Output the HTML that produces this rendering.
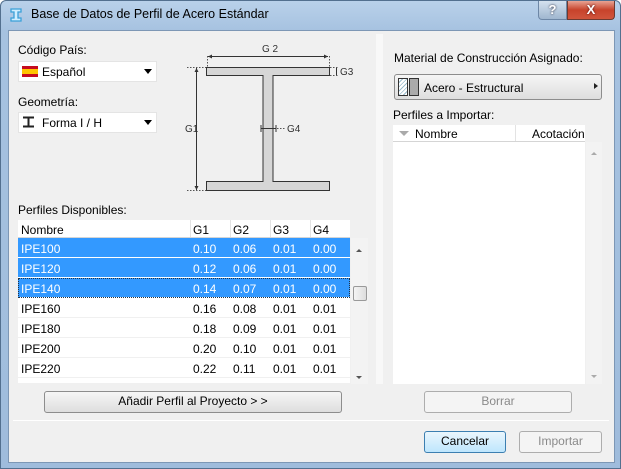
<!DOCTYPE html>
<html><head><meta charset="utf-8"><style>
*{box-sizing:border-box;margin:0;padding:0}
body{width:621px;height:469px;overflow:hidden;font-family:"Liberation Sans",sans-serif;font-size:12px;color:#000;background:#fff}
.win{position:absolute;left:0;top:0;width:621px;height:469px;border:1px solid #53708f;border-radius:6px 6px 0 0;background:linear-gradient(180deg,#b9d1ea 0,#a6c2e0 30px,#9fbcdc 100%)}
.client{position:absolute;left:7px;top:29px;width:607px;height:433px;background:#f0f0f0;border:1px solid #7d97b5}
.a{position:absolute;white-space:nowrap}
.dd{position:absolute;background:#fff;border:1px solid #e4e4e4}
.btn{position:absolute;border:1px solid #8d8d8d;border-radius:3px;background:linear-gradient(#f6f6f6,#dedede);text-align:center;line-height:19px}
.row{position:absolute;left:18px;width:332px;height:20px;border-bottom:1px solid #f0f0f0;background:#fff}
.row span{position:absolute;top:4px}
.sel{background:#3399ff;color:#fff;border-bottom:1px solid #fff}
</style></head><body>
<div class="win">
<svg style="position:absolute;left:8px;top:6px" width="14" height="16"><path d="M2 2h10v3h-3v6h3v3H2v-3h3V5H2z" fill="#cfeeff" stroke="#3aa0d8" stroke-width="1.3"/></svg>
<div class="a" style="left:30px;top:6px;font-size:12.5px">Base de Datos de Perfil de Acero Estándar</div>
<div class="a" style="left:537px;top:0;width:29px;height:19px;border:1px solid #6d87a6;border-top:none;border-radius:0 0 0 4px;background:linear-gradient(#d4e1ee,#9fb6cf);text-align:center;color:#fff;font-weight:bold;font-size:13px;line-height:18px;text-shadow:0 0 2px #223">?</div>
<div class="a" style="left:566px;top:0;width:48px;height:19px;border:1px solid #6d3a30;border-top:none;border-radius:0 0 4px 0;background:linear-gradient(#e8a393,#c7432b 50%,#d0553c);text-align:center;color:#fff;font-weight:bold;font-size:13px;line-height:18px;text-shadow:0 0 2px #400">X</div>
<div class="client"></div>
</div>
<div class="a" style="left:376px;top:34px;width:7px;height:350px;background:#f8f8f8"></div>

<div class="a" style="left:18px;top:43px">Código País:</div>
<div class="dd" style="left:18px;top:61px;width:139px;height:21px"></div>
<div class="a" style="left:22px;top:66px;width:16px;height:11px;background:linear-gradient(#c60b1e 0 3px,#ffc400 3px 8px,#c60b1e 8px)"></div>
<div class="a" style="left:42px;top:65px">Español</div>
<div class="a" style="left:144px;top:69px;border:4px solid transparent;border-top:5px solid #000"></div>
<div class="a" style="left:18px;top:95px">Geometría:</div>
<div class="dd" style="left:18px;top:112px;width:139px;height:21px"></div>
<svg class="a" style="left:22px;top:116px" width="14" height="12"><path d="M1 1.5h11M1 10.5h11M6.5 1v10" stroke="#222" stroke-width="2"/></svg>
<div class="a" style="left:42px;top:116px">Forma I / H</div>
<div class="a" style="left:144px;top:120px;border:4px solid transparent;border-top:5px solid #000"></div>

<svg class="a" style="left:170px;top:35px" width="200" height="165" font-family="Liberation Sans" font-size="10" fill="#333">
<path d="M36.5 32.5h123v8h-56.5v106h56.5v9h-123v-9h56.5v-106h-56.5z" fill="#d6d6d6" stroke="#333"/>
<path d="M38 21.5h120" stroke="#333"/>
<path d="M38 21.5l4-2v4zM158 21.5l-4-2v4z" fill="#333"/>
<path d="M37.5 21v11M159.5 21v11M160 40.5h8M160 32.5h8M17 32.5h19M17 155.5h19" stroke="#555" stroke-dasharray="1.5 1.5"/>
<path d="M26.5 33v122" stroke="#333"/>
<path d="M26.5 33l-2 4h4zM26.5 155l-2-4h4z" fill="#333"/>
<path d="M166.5 33v7" stroke="#333"/>
<path d="M91 93.5h15" stroke="#333"/><path d="M91 90v7M106 90v7" stroke="#333"/>
<path d="M107 93.5h9" stroke="#555" stroke-dasharray="1.5 1.5"/>
<text x="92" y="17">G 2</text><text x="15" y="97">G1</text><text x="170" y="40">G3</text><text x="117" y="97">G4</text>
</svg>

<div class="a" style="left:18px;top:203px">Perfiles Disponibles:</div>
<div class="a" style="left:18px;top:220px;width:332px;height:18px;background:#fff;border-bottom:1px solid #d5d5d5"></div>
<div class="a" style="left:190px;top:220px;width:1px;height:17px;background:#e3e3e3"></div>
<div class="a" style="left:230px;top:220px;width:1px;height:17px;background:#e3e3e3"></div>
<div class="a" style="left:270px;top:220px;width:1px;height:17px;background:#e3e3e3"></div>
<div class="a" style="left:310px;top:220px;width:1px;height:17px;background:#e3e3e3"></div>
<div class="a" style="left:21px;top:223px">Nombre</div><div class="a" style="left:193px;top:223px">G1</div><div class="a" style="left:233px;top:223px">G2</div><div class="a" style="left:273px;top:223px">G3</div><div class="a" style="left:313px;top:223px">G4</div>
<div class="row sel" style="top:238px"><span style="left:3px">IPE100</span><span style="left:175px">0.10</span><span style="left:215px">0.06</span><span style="left:255px">0.01</span><span style="left:295px">0.00</span></div>
<div class="row sel" style="top:258px"><span style="left:3px">IPE120</span><span style="left:175px">0.12</span><span style="left:215px">0.06</span><span style="left:255px">0.01</span><span style="left:295px">0.00</span></div>
<div class="row sel" style="top:278px;outline:1px dotted #234;outline-offset:-1px"><span style="left:3px">IPE140</span><span style="left:175px">0.14</span><span style="left:215px">0.07</span><span style="left:255px">0.01</span><span style="left:295px">0.00</span></div>
<div class="row" style="top:298px"><span style="left:3px">IPE160</span><span style="left:175px">0.16</span><span style="left:215px">0.08</span><span style="left:255px">0.01</span><span style="left:295px">0.01</span></div>
<div class="row" style="top:318px"><span style="left:3px">IPE180</span><span style="left:175px">0.18</span><span style="left:215px">0.09</span><span style="left:255px">0.01</span><span style="left:295px">0.01</span></div>
<div class="row" style="top:338px"><span style="left:3px">IPE200</span><span style="left:175px">0.20</span><span style="left:215px">0.10</span><span style="left:255px">0.01</span><span style="left:295px">0.01</span></div>
<div class="row" style="top:358px"><span style="left:3px">IPE220</span><span style="left:175px">0.22</span><span style="left:215px">0.11</span><span style="left:255px">0.01</span><span style="left:295px">0.01</span></div>
<div class="row" style="top:378px;height:6px;overflow:hidden"></div>
<div class="a" style="left:351px;top:238px;width:17px;height:146px;background:#f3f3f3"></div>
<div class="a" style="left:356px;top:246px;border:3px solid transparent;border-bottom:3px solid #555"></div>
<div class="a" style="left:356px;top:376px;border:3px solid transparent;border-top:3px solid #555"></div>
<div class="a" style="left:353px;top:286px;width:14px;height:15px;border:1px solid #999;border-radius:2px;background:linear-gradient(90deg,#f4f4f4,#ddd)"></div>
<div class="btn" style="left:44px;top:391px;width:298px;height:22px">Añadir Perfil al Proyecto &gt; &gt;</div>

<div class="a" style="left:394px;top:51px">Material de Construcción Asignado:</div>
<div class="btn" style="left:394px;top:74px;width:208px;height:26px;border-radius:3px"></div>
<div class="a" style="left:398px;top:78px;width:10px;height:18px;border:1px solid #333;background:repeating-linear-gradient(135deg,#fff 0 2px,#9bc 2px 3px)"></div>
<div class="a" style="left:409px;top:78px;width:10px;height:18px;border:1px solid #333;background:#aaa"></div>
<div class="a" style="left:424px;top:81px">Acero - Estructural</div>
<div class="a" style="left:594px;top:83px;border:3px solid transparent;border-left:4px solid #222"></div>
<div class="a" style="left:393px;top:108px">Perfiles a Importar:</div>
<div class="a" style="left:393px;top:125px;width:192px;height:259px;background:#fff"></div>
<div class="a" style="left:393px;top:125px;width:192px;height:17px;border-bottom:1px solid #d5d5d5"></div>
<div class="a" style="left:515px;top:125px;width:1px;height:16px;background:#e3e3e3"></div>
<div class="a" style="left:399px;top:131px;border:5px solid transparent;border-top:5px solid #aaa"></div>
<div class="a" style="left:415px;top:127px">Nombre</div><div class="a" style="left:532px;top:127px">Acotación</div>
<div class="a" style="left:586px;top:142px;width:16px;height:242px;background:#f3f3f3"></div>
<div class="a" style="left:591px;top:149px;border:3px solid transparent;border-bottom:3px solid #aaa"></div>
<div class="a" style="left:591px;top:375px;border:3px solid transparent;border-top:3px solid #aaa"></div>
<div class="btn" style="left:424px;top:391px;width:148px;height:22px;color:#8a8a8a;border-color:#adadad;background:#f4f4f4">Borrar</div>

<div class="a" style="left:13px;top:420px;width:596px;height:1px;background:#a0a0a0;border-bottom:1px solid #fff"></div>
<div class="btn" style="left:424px;top:431px;width:82px;height:22px;border-color:#3c7fb1;background:linear-gradient(#eaf6fd,#bee6fd)">Cancelar</div>
<div class="btn" style="left:519px;top:431px;width:83px;height:22px;color:#8a8a8a;border-color:#adadad;background:#f4f4f4">Importar</div>
</body></html>
